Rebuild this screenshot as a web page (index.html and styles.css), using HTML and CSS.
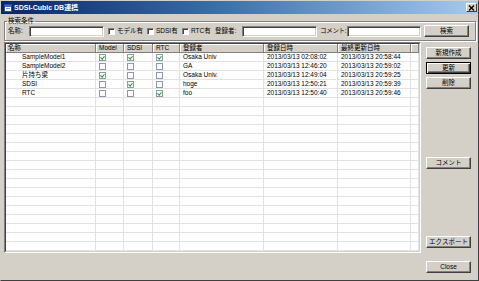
FILE: index.html
```html
<!DOCTYPE html>
<html lang="ja">
<head>
    <meta charset="UTF-8">
    <title>SDSI-Cubic DB連携</title>
    <link rel="stylesheet" href="styles.css">
</head>
<body>
    <div class="window">
        <div class="titlebar">
            <svg class="app-icon" width="8" height="8" viewBox="0 0 8 8">
                <rect x="0.5" y="0.5" width="7" height="7" fill="#fff" stroke="#2a4f9c"/>
                <rect x="1" y="1" width="6" height="2" fill="#3a6fd0"/>
                <rect x="2" y="4" width="4" height="1" fill="#7c9bd4"/>
            </svg>
            <span class="title">SDSI-Cubic DB連携</span>
            <span class="close-btn">
                <svg width="7" height="6" viewBox="0 0 7 6">
                    <path d="M1 0.5 L6 5.5 M6 0.5 L1 5.5" stroke="#000" stroke-width="1.3"/>
                </svg>
            </span>
        </div>

        <div class="content">
            <fieldset class="search">
                <legend>検索条件</legend>
                <div class="search-row">
                    <span class="lbl lbl-name">名称:</span>
                    <span class="field f-name"></span>
                    <label class="opt opt-model"><span class="box"></span>モデル有</label>
                    <label class="opt opt-sdsi"><span class="box"></span>SDSI有</label>
                    <label class="opt opt-rtc"><span class="box"></span>RTC有</label>
                    <span class="lbl lbl-user">登録者:</span>
                    <span class="field f-user"></span>
                    <span class="lbl lbl-comment">コメント:</span>
                    <span class="field f-comment"></span>
                    <span class="btn btn-search">検索</span>
                </div>
            </fieldset>

            <div class="main">
                <div class="list">
                    <table>
                        <colgroup>
                            <col style="width:90px">
                            <col style="width:28px">
                            <col style="width:29px">
                            <col style="width:27px">
                            <col style="width:84px">
                            <col style="width:74px">
                            <col style="width:73px">
                            <col style="width:8px">
                        </colgroup>
                        <thead>
                            <tr>
                                <th>名称</th><th>Model</th><th>SDSI</th><th>RTC</th>
                                <th>登録者</th><th>登録日時</th><th>最終更新日時</th><th></th>
                            </tr>
                        </thead>
                        <tbody>
                            <tr>
                                <td class="name">SampleModel1</td>
                                <td><span class="chk on"></span></td>
                                <td><span class="chk on"></span></td>
                                <td><span class="chk on"></span></td>
                                <td>Osaka Univ</td>
                                <td>2013/03/13 02:08:02</td>
                                <td>2013/03/13 20:58:44</td>
                                <td></td>
                            </tr>
                            <tr>
                                <td class="name">SampleModel2</td>
                                <td><span class="chk"></span></td>
                                <td><span class="chk"></span></td>
                                <td><span class="chk"></span></td>
                                <td>GA</td>
                                <td>2013/03/13 12:46:20</td>
                                <td>2013/03/13 20:59:02</td>
                                <td></td>
                            </tr>
                            <tr>
                                <td class="name">片持ち梁</td>
                                <td><span class="chk on"></span></td>
                                <td><span class="chk"></span></td>
                                <td><span class="chk"></span></td>
                                <td>Osaka Univ.</td>
                                <td>2013/03/13 12:49:04</td>
                                <td>2013/03/13 20:59:25</td>
                                <td></td>
                            </tr>
                            <tr>
                                <td class="name">SDSI</td>
                                <td><span class="chk"></span></td>
                                <td><span class="chk on"></span></td>
                                <td><span class="chk"></span></td>
                                <td>hoge</td>
                                <td>2013/03/13 12:50:21</td>
                                <td>2013/03/13 20:59:39</td>
                                <td></td>
                            </tr>
                            <tr>
                                <td class="name">RTC</td>
                                <td><span class="chk"></span></td>
                                <td><span class="chk"></span></td>
                                <td><span class="chk on"></span></td>
                                <td>foo</td>
                                <td>2013/03/13 12:50:40</td>
                                <td>2013/03/13 20:59:46</td>
                                <td></td>
                            </tr>
                            <tr><td></td><td></td><td></td><td></td><td></td><td></td><td></td><td></td></tr>
                            <tr><td></td><td></td><td></td><td></td><td></td><td></td><td></td><td></td></tr>
                            <tr><td></td><td></td><td></td><td></td><td></td><td></td><td></td><td></td></tr>
                            <tr><td></td><td></td><td></td><td></td><td></td><td></td><td></td><td></td></tr>
                            <tr><td></td><td></td><td></td><td></td><td></td><td></td><td></td><td></td></tr>
                            <tr><td></td><td></td><td></td><td></td><td></td><td></td><td></td><td></td></tr>
                            <tr><td></td><td></td><td></td><td></td><td></td><td></td><td></td><td></td></tr>
                            <tr><td></td><td></td><td></td><td></td><td></td><td></td><td></td><td></td></tr>
                            <tr><td></td><td></td><td></td><td></td><td></td><td></td><td></td><td></td></tr>
                            <tr><td></td><td></td><td></td><td></td><td></td><td></td><td></td><td></td></tr>
                            <tr><td></td><td></td><td></td><td></td><td></td><td></td><td></td><td></td></tr>
                            <tr><td></td><td></td><td></td><td></td><td></td><td></td><td></td><td></td></tr>
                            <tr><td></td><td></td><td></td><td></td><td></td><td></td><td></td><td></td></tr>
                            <tr><td></td><td></td><td></td><td></td><td></td><td></td><td></td><td></td></tr>
                            <tr><td></td><td></td><td></td><td></td><td></td><td></td><td></td><td></td></tr>
                            <tr><td></td><td></td><td></td><td></td><td></td><td></td><td></td><td></td></tr>
                            <tr><td></td><td></td><td></td><td></td><td></td><td></td><td></td><td></td></tr>
                        </tbody>
                    </table>
                </div>

                <div class="side">
                    <span class="btn btn-new">新規作成</span>
                    <span class="btn btn-focus">更新</span>
                    <span class="btn">削除</span>
                    <span class="btn btn-comment">コメント</span>
                    <span class="btn btn-export">エクスポート</span>
                    <span class="btn btn-close">Close</span>
                </div>
            </div>
        </div>
    </div>
</body>
</html>
```

FILE: styles.css
```css
:root {
    --face: #d4d0c8;
    --shadow: #808080;
    --dark: #404040;
    --grid-line: #e2e2e2;
}

body {
    margin: 0;
    background: var(--face);
}

.window {
    width: 479px;
    height: 281px;
    box-sizing: border-box;
    border: 1px solid;
    border-color: var(--face) var(--dark) var(--dark) var(--face);
    background: var(--face);
    display: flex;
    flex-direction: column;
    font-family: "Liberation Sans", "Noto Sans CJK JP", sans-serif;
    font-size: 6.5px;
    line-height: 8px;
    color: #000;
}

/* title bar */
.titlebar {
    height: 13px;
    display: flex;
    align-items: center;
    padding: 0 1px 0 3px;
    background: linear-gradient(90deg, #0a246a 0%, #3a6ea5 45%, #a6caf0 100%);
    color: #fff;
}

.app-icon {
    flex: none;
}

.title {
    margin-left: 2px;
    font-weight: bold;
    font-size: 7px;
}

.close-btn {
    margin-left: auto;
    width: 11px;
    height: 9px;
    box-sizing: border-box;
    display: flex;
    align-items: center;
    justify-content: center;
    background: var(--face);
    border: 1px solid;
    border-color: #fff var(--dark) var(--dark) #fff;
}

/* search group */
.content {
    flex: 1;
    display: flex;
    flex-direction: column;
    padding: 0 2px 0 3px;
}

.search {
    margin: 3px 0 0;
    padding: 0 3px 3px;
    border: 1px solid var(--shadow);
    box-shadow: inset 1px 1px #fff, 1px 1px #fff;
    min-width: 0;
}

.search legend {
    padding: 0 1px;
    margin-left: -1px;
    line-height: 8px;
}

.search-row {
    display: flex;
    align-items: center;
    height: 12px;
}

.lbl {
    flex: none;
    white-space: nowrap;
}

.lbl-name { width: 21px; }
.lbl-user { width: 27px; }
.lbl-comment { margin: 0 1px 0 3px; letter-spacing: -0.3px; }

.field {
    flex: none;
    height: 11px;
    box-sizing: border-box;
    background: #fff;
    border: 1px solid;
    border-color: var(--shadow) #fff #fff var(--shadow);
    box-shadow: inset 1px 1px var(--dark), inset -1px -1px var(--face);
}

.f-name { width: 75px; margin-right: 4px; }
.f-user { width: 75px; }
.f-comment { flex: 1; margin-right: 3px; }

.opt {
    flex: none;
    display: flex;
    align-items: center;
    gap: 2px;
    white-space: nowrap;
}

.opt-model { width: 39px; }
.opt-sdsi { width: 35px; }
.opt-rtc { width: 33px; }

.box {
    width: 7px;
    height: 7px;
    box-sizing: border-box;
    background: #fff;
    border: 1px solid;
    border-color: var(--shadow) #fff #fff var(--shadow);
    box-shadow: inset 1px 1px var(--dark);
}

/* buttons */
.btn {
    flex: none;
    width: 45px;
    height: 12px;
    box-sizing: border-box;
    display: flex;
    align-items: center;
    justify-content: center;
    background: var(--face);
    border: 1px solid;
    border-color: #fff var(--dark) var(--dark) #fff;
    box-shadow: inset -1px -1px var(--shadow);
    white-space: nowrap;
}

.btn-search { margin-right: 3px; }

.btn-focus {
    border-color: #000;
    box-shadow: inset 1px 1px #fff, inset -1px -1px var(--dark), inset -2px -2px var(--shadow);
}

/* list */
.main {
    flex: 1;
    display: flex;
    align-items: flex-start;
    margin-top: 1px;
}

.list {
    flex: none;
    border: 1px solid;
    border-color: var(--shadow) #fff #fff var(--shadow);
    background: #fff;
}

.list table {
    width: 415px;
    table-layout: fixed;
    border-collapse: separate;
    border-spacing: 0;
    border: 1px solid;
    border-color: var(--dark) var(--face) var(--face) var(--dark);
}

.list tr {
    height: 9px;
}

.list th,
.list td {
    padding: 0 0 0 3px;
    line-height: 8px;
    text-align: left;
    white-space: nowrap;
    overflow: hidden;
    vertical-align: middle;
}

.list th {
    font-weight: normal;
    background: var(--face);
    border-right: 1px solid var(--shadow);
    border-bottom: 1px solid var(--shadow);
    box-shadow: inset 1px 1px #fff;
}

.list th:first-child {
    padding-left: 2px;
}

.list td {
    border-right: 1px solid var(--grid-line);
    border-bottom: 1px solid var(--grid-line);
}

.list td.name {
    padding-left: 16px;
}

.chk {
    width: 7px;
    height: 7px;
    box-sizing: border-box;
    display: flex;
    align-items: center;
    justify-content: center;
    border: 1px solid #8a9bb0;
    background: #fbfbfb;
}

.chk.on::after {
    content: "";
    width: 1.5px;
    height: 3px;
    margin-top: -1px;
    border: solid #21a121;
    border-width: 0 1px 1px 0;
    transform: rotate(40deg);
}

.side {
    flex: none;
    display: flex;
    flex-direction: column;
    gap: 3px;
    margin-left: 5px;
}

.btn-new { margin-top: 5px; }
.btn-comment { margin-top: 65px; }
.btn-export { margin-top: 64px; }
.btn-close { margin-top: 10px; }
```
